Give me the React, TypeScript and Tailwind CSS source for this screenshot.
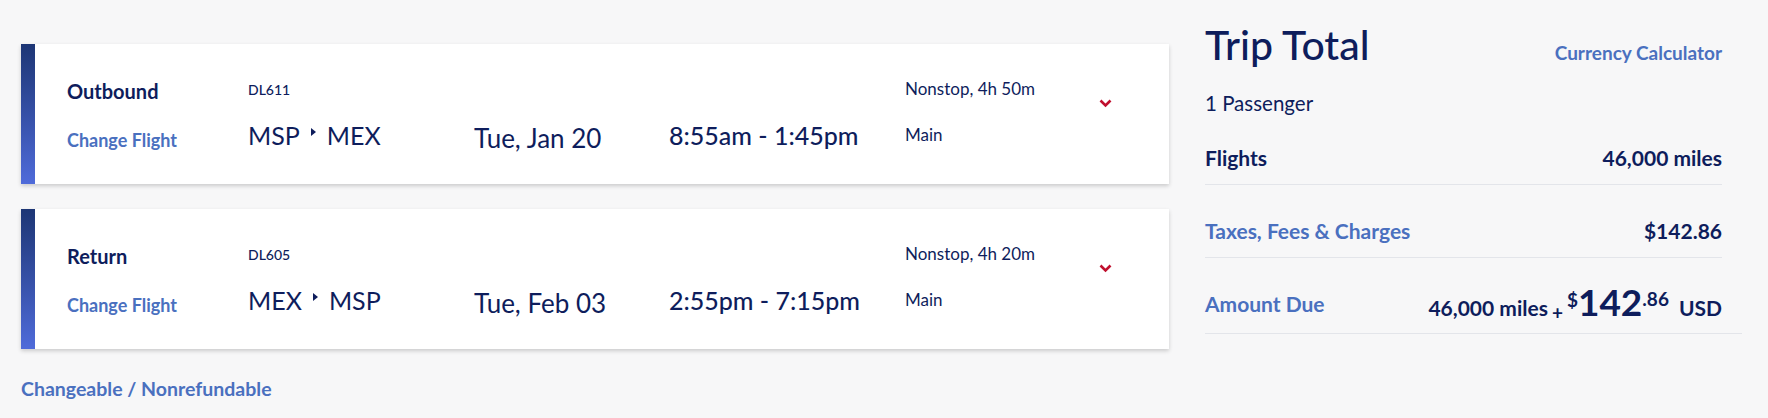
import React from 'react';

interface Flight {
  label: string;
  number: string;
  from: string;
  to: string;
  date: string;
  times: string;
  stops: string;
  cabin: string;
}

const flights: Flight[] = [
  { label: 'Outbound', number: 'DL611', from: 'MSP', to: 'MEX', date: 'Tue, Jan 20', times: '8:55am - 1:45pm', stops: 'Nonstop, 4h 50m', cabin: 'Main' },
  { label: 'Return', number: 'DL605', from: 'MEX', to: 'MSP', date: 'Tue, Feb 03', times: '2:55pm - 7:15pm', stops: 'Nonstop, 4h 20m', cabin: 'Main' },
];

function FlightCard({ flight }: { flight: Flight }) {
  return (
    <div className="flex h-[140px] bg-white shadow-[0_2px_4px_rgba(0,0,0,0.18)]">
      <div className="w-[14px] bg-gradient-to-b from-[#1d3675] to-[#4f6bda]" />
      <div className="flex pl-[32px] pt-[33px]">
        <div className="flex w-[181px] flex-col">
          <div className="mt-[2px] flex h-[24px] items-center text-[20px] font-bold text-[#0e1d5c]">{flight.label}</div>
          <div className="mt-[19px] flex h-[36px] items-center text-[18px] font-bold text-[#4a70bf]">Change Flight</div>
        </div>
        <div className="flex w-[226px] flex-col">
          <div className="flex h-[24px] items-center text-[14px] font-medium text-[#0e1d5c]">{flight.number}</div>
          <div className="mt-[17px] flex h-[36px] items-center text-[25px] text-[#0e1d5c]">
            <span>{flight.from}</span>
            <svg className="mx-[11px] mb-[8px]" width="5" height="8" viewBox="0 0 5 8">
              <path d="M0 0 L5 4 L0 8 Z" fill="#0e1d5c" />
            </svg>
            <span>{flight.to}</span>
          </div>
        </div>
        <div className="flex w-[195px] flex-col">
          <div className="h-[24px]" />
          <div className="mt-[19px] flex h-[36px] items-center text-[26px] text-[#0e1d5c]">{flight.date}</div>
        </div>
        <div className="flex w-[236px] flex-col">
          <div className="h-[24px]" />
          <div className="mt-[17px] flex h-[36px] items-center text-[25px] font-medium text-[#0e1d5c]">{flight.times}</div>
        </div>
        <div className="flex w-[194px] flex-col">
          <div className="flex h-[24px] items-center text-[17px] text-[#0e1d5c]">{flight.stops}</div>
          <div className="mt-[16px] flex h-[36px] items-center text-[17px] text-[#0e1d5c]">{flight.cabin}</div>
        </div>
        <div className="pt-[22px]">
          <svg width="13" height="9" viewBox="0 0 13 9">
            <path d="M1.5 1.5 L6.5 6.5 L11.5 1.5" fill="none" stroke="#c0102e" strokeWidth="2.6" />
          </svg>
        </div>
      </div>
    </div>
  );
}

export default function App() {
  return (
    <div
      className="flex h-[418px] w-full bg-[#f7f7f8] pl-[21px] pt-[22px]"
      style={{ fontFamily: 'Lato, "Noto Sans", sans-serif' }}
    >
      <div className="w-[1148px] pt-[22px]">
        <div className="flex flex-col gap-[25px]">
          {flights.map((f) => (
            <FlightCard key={f.number} flight={f} />
          ))}
        </div>
        <div className="mt-[25px] text-[19.5px] font-bold text-[#4a70bf]">Changeable / Nonrefundable</div>
      </div>

      {/* Trip Total */}
      <div className="ml-[36px] flex w-[537px] flex-col text-[#0e1d5c]">
        <div className="flex w-[517px] items-baseline justify-between">
          <div className="text-[41px] font-medium leading-[46px]">Trip Total</div>
          <div className="text-[19px] font-bold text-[#4a70bf]">Currency Calculator</div>
        </div>
        <div className="mt-[23px] text-[20.5px] leading-[25px]">1 Passenger</div>
        <div className="flex h-[69px] w-[517px] items-end justify-between border-b border-[#e3e5ea] pb-[11px] text-[21px] font-bold">
          <span>Flights</span>
          <span>46,000 miles</span>
        </div>
        <div className="flex h-[73px] w-[517px] items-end justify-between border-b border-[#e3e5ea] pb-[11px] text-[21px] font-bold">
          <span className="text-[#4a70bf]">Taxes, Fees &amp; Charges</span>
          <span>$142.86</span>
        </div>
        <div className="flex h-[76px] items-end justify-between border-b border-[#e3e5ea] pb-[10px] pr-[20px] text-[21px] font-bold">
          <span className="mb-[4px] text-[#4a70bf]">Amount Due</span>
          <span className="flex items-baseline">
            <span>46,000 miles</span>
            <span className="relative top-[4px] mx-[4px] text-[19px]">+</span>
            <span className="relative -top-[9px] text-[19px]">$</span>
            <span className="text-[37px] leading-[36px]">142</span>
            <span className="relative -top-[10px] text-[19px]">.86</span>
            <span className="ml-[10px]">USD</span>
          </span>
        </div>
      </div>
    </div>
  );
}
